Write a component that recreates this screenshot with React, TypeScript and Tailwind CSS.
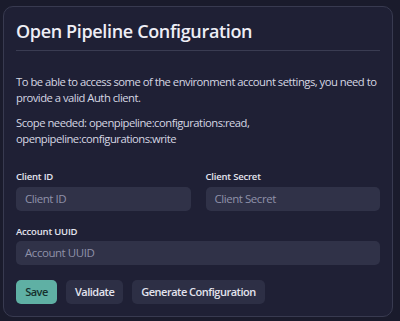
import React from "react";

export default function App() {
  return (
    <div className="w-[400px] h-[321px] bg-[#1a1b2c] pt-[6px] pl-[3px] font-['Open_Sans',sans-serif]">
      <div className="w-[390px] h-[311px] rounded-[10px] border border-[#383a50] bg-[#1f2035] px-[12px] pt-[10px]">
        <h1 className="text-[18px] leading-[28px] font-semibold text-[#eeeef5] tracking-[-0.35px]">Open Pipeline Configuration</h1>
        <div className="mt-[5px] h-px bg-[#3a3c52]" />
        <p className="mt-[23px] text-[11.25px] leading-[16px] text-[#d6d7e3] tracking-[-0.5px]">
          To be able to access some of the environment account settings, you need to provide a valid Auth client.
        </p>
        <p className="mt-[9px] text-[11.25px] leading-[16px] text-[#d6d7e3] tracking-[-0.5px]">
          Scope needed: openpipeline:configurations:read, openpipeline:configurations:write
        </p>
        <div className="mt-[23px] grid grid-cols-2 gap-x-[15px]">
          <div className="flex flex-col">
            <label className="text-[9.5px] leading-[14px] font-semibold text-[#e3e4ee] tracking-[-0.2px]">Client ID</label>
            <div className="mt-[3px] h-[24px] rounded-[5px] bg-[#303248] px-[9px] flex items-center text-[11.5px] text-[#8f91a8] tracking-[-0.45px]">Client ID</div>
          </div>
          <div className="flex flex-col">
            <label className="text-[9.5px] leading-[14px] font-semibold text-[#e3e4ee] tracking-[-0.2px]">Client Secret</label>
            <div className="mt-[3px] h-[24px] rounded-[5px] bg-[#303248] px-[9px] flex items-center text-[11.5px] text-[#8f91a8] tracking-[-0.45px]">Client Secret</div>
          </div>
        </div>
        <div className="mt-[14px] flex flex-col">
          <label className="text-[9.5px] leading-[14px] font-semibold text-[#e3e4ee] tracking-[-0.2px]">Account UUID</label>
          <div className="mt-[2px] h-[24px] rounded-[5px] bg-[#303248] px-[9px] flex items-center text-[11.5px] text-[#8f91a8] tracking-[-0.45px]">Account UUID</div>
        </div>
        <div className="mt-[15px] flex gap-[9px] tracking-[-0.5px]">
          <button className="h-[24px] w-[41px] rounded-[5px] bg-[#5fb0a4] text-[11px] font-semibold text-[#16302e]">Save</button>
          <button className="h-[24px] px-[9px] rounded-[5px] bg-[#2d2f45] text-[11px] font-semibold text-[#e3e4ee]">Validate</button>
          <button className="h-[24px] px-[9px] rounded-[5px] bg-[#2d2f45] text-[11px] font-semibold text-[#e3e4ee]">Generate Configuration</button>
        </div>
      </div>
    </div>
  );
}
